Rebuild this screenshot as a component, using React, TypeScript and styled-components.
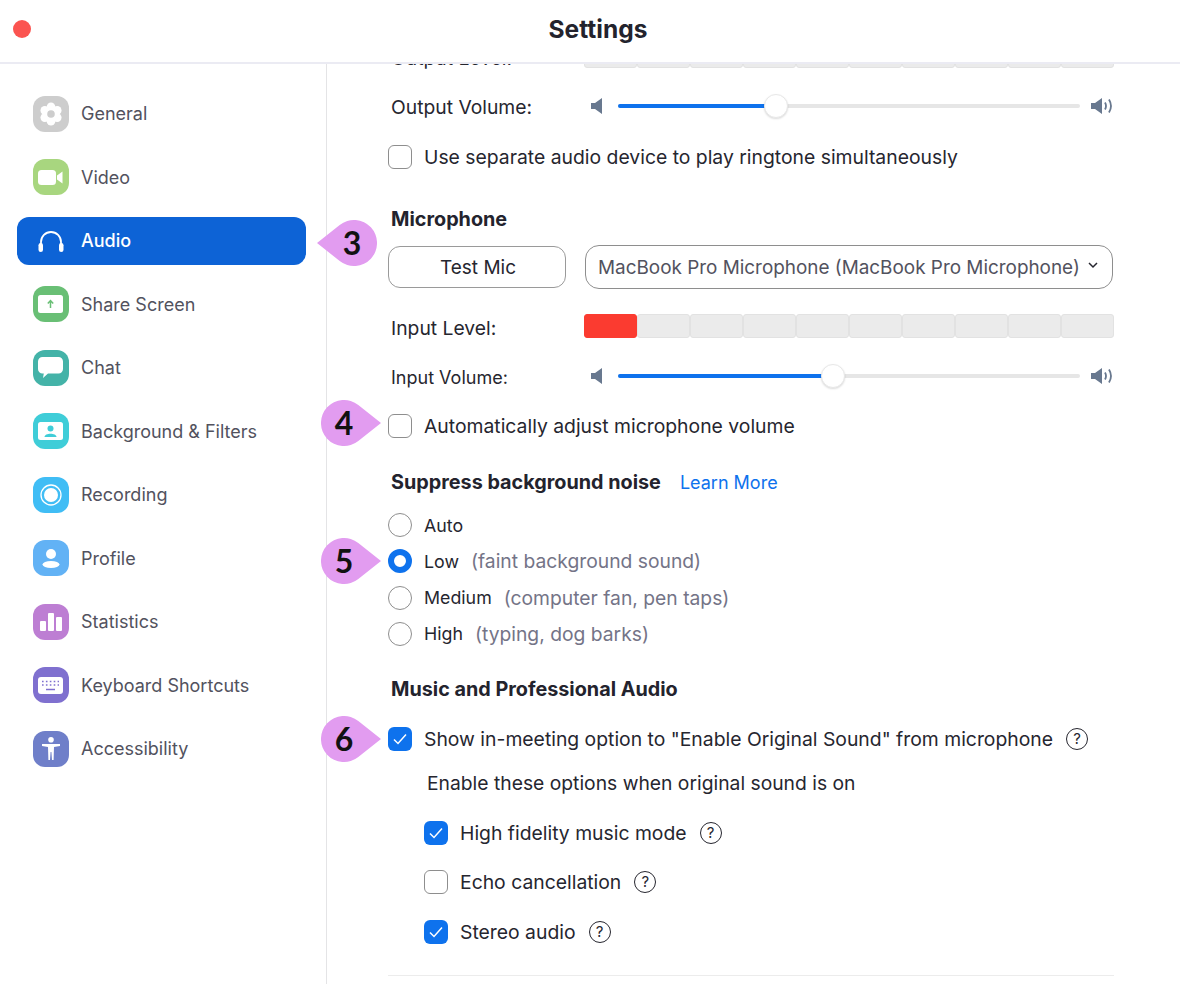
import styled, { createGlobalStyle } from "styled-components";
import type { ReactNode } from "react";

const GlobalStyle = createGlobalStyle`
    html, body {
        margin: 0;
        background: #fff;
        overflow: hidden;
    }
    * {
        box-sizing: border-box;
    }
`

const Page = styled.div`
    position: relative;
    width: 1180px;
    height: 984px;
    display: flex;
    flex-direction: column;
    overflow: hidden;
    font-family: Inter, "Liberation Sans", sans-serif;
    color: #26262f;
`

const Header = styled.header`
    position: relative;
    z-index: 1;
    height: 64px;
    flex: none;
    display: flex;
    align-items: center;
    justify-content: center;
    padding: 0 0 4px 16px;
    border-bottom: 2px solid #ebebf3;
    background: #fff;
`

const CloseDot = styled.span`
    position: absolute;
    left: 13px;
    top: 20px;
    width: 18px;
    height: 18px;
    border-radius: 50%;
    background: #fb5450;
`

const Title = styled.h1`
    margin: 0;
    font-size: 24.5px;
    font-weight: 700;
    color: #23232d;
`

const Body = styled.div`
    flex: 1;
    display: flex;
    min-height: 0;
`

const Sidebar = styled.nav`
    width: 327px;
    flex: none;
    display: flex;
    flex-direction: column;
    gap: 15.5px;
    padding: 25.5px 20px 0 17px;
    border-right: 1px solid #e4e4e6;
`

const NavItem = styled.div<{ $active?: boolean }>`
    height: 48px;
    display: flex;
    align-items: center;
    gap: 12.5px;
    padding-left: 15.5px;
    border-radius: 12px;
    font-size: 18px;
    font-weight: ${(p) => (p.$active ? 500 : 400)};
    color: ${(p) => (p.$active ? "#fff" : "#52525e")};
    background: ${(p) => (p.$active ? "#0d63d6" : "transparent")};
`

const NavIcon = styled.span<{ $bg: string }>`
    width: 36px;
    height: 36px;
    flex: none;
    display: flex;
    align-items: center;
    justify-content: center;
    border-radius: 12px;
    background: ${(p) => p.$bg};
`

const Main = styled.main`
    flex: 1;
    min-width: 0;
    overflow: hidden;
    padding: 0 66px 0 61px;
`

const Content = styled.div`
    margin-top: -20px;
    display: flex;
    flex-direction: column;
`

const LabelRow = styled.div<{ $top?: number }>`
    display: grid;
    grid-template-columns: 196px 1fr;
    grid-template-rows: 24px;
    align-items: start;
    height: 24px;
    margin-top: ${(p) => p.$top ?? 0}px;
`

const RowLabel = styled.span<{ $size?: number; $drop?: number }>`
    margin-top: ${(p) => p.$drop ?? 2}px;
    padding-left: 3px;
    font-size: ${(p) => p.$size ?? 19.3}px;
    line-height: 24px;
    white-space: nowrap;
    color: #26262f;
`

const Meter = styled.div`
    display: grid;
    grid-template-columns: repeat(10, 1fr);
    height: 24px;
`

const Segment = styled.span<{ $on?: boolean }>`
    border-radius: 3px;
    background: ${(p) => (p.$on ? "#fb3b30" : "#ebebeb")};
    border: 1px solid ${(p) => (p.$on ? "#fb3b30" : "#e2e2e2")};
`

const SliderBox = styled.div`
    display: flex;
    align-items: center;
    height: 24px;
`

const Track = styled.div`
    position: relative;
    flex: 1;
    height: 4px;
    margin: 0 11px 0 15px;
    border-radius: 2px;
    background: #e6e6e6;
`

const TrackFill = styled.div`
    height: 100%;
    border-radius: 2px;
    background: #0e72ed;
`

const Thumb = styled.span`
    position: absolute;
    top: -10px;
    width: 24px;
    height: 24px;
    margin-left: -12px;
    border-radius: 50%;
    background: #fff;
    border: 1px solid #e8e8e8;
    box-shadow: 0 1px 2px rgba(0, 0, 0, 0.14);
`

const OptionRow = styled.div<{ $top?: number; $indent?: number }>`
    display: flex;
    align-items: center;
    gap: 12px;
    height: 24px;
    margin-top: ${(p) => p.$top ?? 0}px;
    margin-left: ${(p) => p.$indent ?? 0}px;
    font-size: 19.35px;
    white-space: nowrap;
    color: #26262f;
`

const Box = styled.span<{ $checked?: boolean }>`
    width: 24px;
    height: 24px;
    flex: none;
    display: flex;
    align-items: center;
    justify-content: center;
    border-radius: 6px;
    background: ${(p) => (p.$checked ? "#0e72ed" : "#fff")};
    border: ${(p) => (p.$checked ? "none" : "1.5px solid #8e8e8e")};
`

const Help = styled.span`
    width: 22px;
    height: 22px;
    flex: none;
    display: flex;
    align-items: center;
    justify-content: center;
    margin-left: 1px;
    border-radius: 50%;
    border: 1.4px solid #26262f;
    font-size: 15px;
    color: #26262f;
`

const Heading = styled.h2<{ $top: number }>`
    display: flex;
    align-items: center;
    gap: 19px;
    height: 24px;
    margin: ${(p) => p.$top}px 0 0;
    padding-left: 3px;
    font-size: 19.8px;
    font-weight: 700;
    color: #23232d;
`

const LearnMore = styled.a`
    font-size: 18px;
    font-weight: 400;
    color: #0e72ed;
`

const MicControls = styled.div`
    display: flex;
    align-items: center;
    gap: 19px;
    height: 44px;
    margin-top: 14px;
`

const TestButton = styled.button`
    width: 178px;
    height: 42px;
    flex: none;
    padding: 0 0 0 2px;
    border: 1.5px solid #9a9a9a;
    border-radius: 12px;
    background: #fff;
    font-family: inherit;
    font-size: 19px;
    color: #26262f;
`

const DeviceSelect = styled.div`
    flex: 1;
    height: 44px;
    display: flex;
    align-items: center;
    justify-content: space-between;
    margin-right: 1px;
    padding: 0 14px 0 12px;
    border: 1.5px solid #8e8e8e;
    border-radius: 14px;
    font-size: 18.9px;
    white-space: nowrap;
    color: #52525e;
`

const Chevron = styled.svg`
    flex: none;
    margin-bottom: 4px;
`

const RadioGroup = styled.div`
    display: flex;
    flex-direction: column;
    gap: 12.33px;
    margin-top: 19px;
`

const Radio = styled.span<{ $checked?: boolean }>`
    width: 24px;
    height: 24px;
    flex: none;
    border-radius: 50%;
    background: #fff;
    border: ${(p) => (p.$checked ? "6.5px solid #0e72ed" : "1.5px solid #8e8e8e")};
`

const RadioLabel = styled.span`
    font-size: 17.8px;
`

const Hint = styled.span`
    font-size: 19.3px;
    color: #747487;
`

const SubNote = styled.div`
    height: 24px;
    display: flex;
    align-items: center;
    margin-top: 20px;
    padding-left: 39px;
    font-size: 19.3px;
    white-space: nowrap;
    color: #26262f;
`

const Divider = styled.hr`
    width: 100%;
    margin: 31px 0 0;
    border: none;
    border-top: 1px solid #ececec;
`

const CalloutWrap = styled.div<{ $x: number; $y: number; $flip?: boolean }>`
    position: absolute;
    left: ${(p) => p.$x}px;
    top: ${(p) => p.$y}px;
    width: 60px;
    height: 46px;
    display: flex;
    align-items: center;
    justify-content: ${(p) => (p.$flip ? "flex-end" : "flex-start")};
    padding-right: ${(p) => (p.$flip ? 2 : 0)}px;
`

const CalloutShape = styled.svg`
    position: absolute;
    inset: 0;
`

const CalloutNumber = styled.span`
    position: relative;
    width: 46px;
    padding-bottom: 2px;
    text-align: center;
    font-family: Lato, Inter, sans-serif;
    font-size: 32px;
    font-weight: 700;
    color: #111;
`

const Speaker = styled.svg`
    flex: none;
`

const SpeakerLowMark = styled(Speaker)`
    margin-left: 7px;
`

const Callout = ({ n, x, y, left }: { n: number; x: number; y: number; left?: boolean }) => (
    <CalloutWrap $x={x} $y={y} $flip={left}>
        <CalloutShape width="60" height="46" viewBox="0 0 60 46">
            <path
                d={left
                    ? "M0 23 L22.700 5 A23 23 0 1 1 22.700 41 Z"
                    : "M60 23 L37.300 5 A23 23 0 1 0 37.300 41 Z"}
                fill="#e29cf0"
            />
        </CalloutShape>
        <CalloutNumber>{n}</CalloutNumber>
    </CalloutWrap>
)

const SpeakerLow = () => (
    <SpeakerLowMark width="12" height="16" viewBox="0 0 12 16">
        <path d="M0 5 H4 L11 0 V16 L4 11 H0 Z" fill="#68788f" />
    </SpeakerLowMark>
)

const SpeakerHigh = () => (
    <Speaker width="23" height="16" viewBox="0 0 23 16">
        <path d="M0 5 H4 L11 0 V16 L4 11 H0 Z" fill="#68788f" />
        <path d="M14 4.500 Q16 8 14 11.500M18 1.500 Q22 8 18 14.500" stroke="#68788f" strokeWidth="1.800" fill="none" />
    </Speaker>
)

const Check = () => (
    <svg width="16" height="14" viewBox="0 0 16 14">
        <path d="M2 7.500 L6 11.500 L14 2.500" stroke="#fff" strokeWidth="1.500" fill="none" />
    </svg>
)

const VolumeSlider = ({ label, percent, top, size, drop }: { label: string; percent: number; top: number; size?: number; drop: number }) => (
    <LabelRow $top={top}>
        <RowLabel $size={size} $drop={drop}>{label}</RowLabel>
        <SliderBox>
            <SpeakerLow />
            <Track>
                <TrackFill style={{ width: `${percent}%` }} />
                <Thumb style={{ left: `${percent}%` }} />
            </Track>
            <SpeakerHigh />
        </SliderBox>
    </LabelRow>
)

const LevelMeter = ({ active }: { active: number }) => (
    <Meter>
        {Array.from({ length: 10 }, (_, i) => <Segment key={i} $on={i < active} />)}
    </Meter>
)

const lobes = [0, 60, 120, 180, 240, 300].map((deg) => ({
    x: 12 + 7.2 * Math.cos((deg * Math.PI) / 180),
    y: 12 + 7.2 * Math.sin((deg * Math.PI) / 180),
}))

const icons: { name: string; bg: string; glyph: ReactNode }[] = [
    {
        name: "General", bg: "#cdcdcd", glyph: (
            <svg width="24" height="24" viewBox="0 0 24 24">
                {lobes.map((l, i) => <circle key={i} cx={l.y} cy={l.x} r="4.300" fill="#fff" />)}
                <circle cx="12" cy="12" r="7.500" fill="#fff" />
                <circle cx="12" cy="12" r="3.800" fill="#cdcdcd" />
            </svg>
        ),
    },
    {
        name: "Video", bg: "#a8d67f", glyph: (
            <svg width="25" height="15" viewBox="0 0 25 15">
                <rect x="0" y="0" width="18" height="15" rx="3.500" fill="#fff" />
                <path d="M19 5.500 L24.500 1.500 V13.500 L19 9.500 Z" fill="#fff" />
            </svg>
        ),
    },
    {
        name: "Audio", bg: "transparent", glyph: (
            <svg width="26" height="24" viewBox="0 0 26 24">
                <path d="M3 17 V13 A10 10 0 0 1 23 13 V17" stroke="#fff" strokeWidth="1.800" fill="none" />
                <rect x="0.500" y="14" width="4.500" height="9" rx="2.250" fill="#fff" />
                <rect x="21" y="14" width="4.500" height="9" rx="2.250" fill="#fff" />
            </svg>
        ),
    },
    {
        name: "Share Screen", bg: "#69bf75", glyph: (
            <svg width="25" height="18" viewBox="0 0 25 18">
                <rect width="25" height="18" rx="2.500" fill="#fff" />
                <path d="M12.500 13 V6 M9.800 8.500 L12.500 5.500 L15.200 8.500" stroke="#69bf75" strokeWidth="1.500" fill="none" />
            </svg>
        ),
    },
    {
        name: "Chat", bg: "#44b3a8", glyph: (
            <svg width="25" height="21" viewBox="0 0 25 21">
                <path d="M4.500 0 H20.500 A4.500 4.500 0 0 1 25 4.500 V12 A4.500 4.500 0 0 1 20.500 16.500 H10 L5 21 L5.800 16.500 H4.500 A4.500 4.500 0 0 1 0 12 V4.500 A4.500 4.500 0 0 1 4.500 0 Z" fill="#fff" />
            </svg>
        ),
    },
    {
        name: "Background & Filters", bg: "#3fcdd8", glyph: (
            <svg width="25" height="18" viewBox="0 0 25 18">
                <rect width="25" height="18" rx="2.500" fill="#fff" />
                <circle cx="12.500" cy="6.500" r="3" fill="#3fcdd8" />
                <path d="M6.500 15 C6.500 10.500 18.500 10.500 18.500 15 Z" fill="#3fcdd8" />
            </svg>
        ),
    },
    {
        name: "Recording", bg: "#40bdf5", glyph: (
            <svg width="24" height="24" viewBox="0 0 24 24">
                <circle cx="12" cy="12" r="10" stroke="#fff" strokeWidth="1.300" fill="none" />
                <circle cx="12" cy="12" r="7" fill="#fff" />
            </svg>
        ),
    },
    {
        name: "Profile", bg: "#62b2f5", glyph: (
            <svg width="18" height="19" viewBox="0 0 18 19">
                <circle cx="9" cy="5" r="5" fill="#fff" />
                <ellipse cx="9" cy="15.500" rx="8.500" ry="3.500" fill="#fff" />
            </svg>
        ),
    },
    {
        name: "Statistics", bg: "#bd7ed3", glyph: (
            <svg width="22" height="18" viewBox="0 0 22 18">
                <rect x="0" y="8" width="6" height="10" rx="1" fill="#fff" />
                <rect x="8" y="0" width="6" height="18" rx="1" fill="#fff" />
                <rect x="16" y="4" width="6" height="14" rx="1" fill="#fff" />
            </svg>
        ),
    },
    {
        name: "Keyboard Shortcuts", bg: "#7f70cf", glyph: (
            <svg width="25" height="17" viewBox="0 0 25 17">
                <rect width="25" height="17" rx="3" fill="#fff" />
                <path d="M4 4.500 H21 M4 8 H21" stroke="#7f70cf" strokeWidth="1.600" strokeDasharray="1.600 2.300" />
                <path d="M8 12.500 H17" stroke="#7f70cf" strokeWidth="1.500" />
            </svg>
        ),
    },
    {
        name: "Accessibility", bg: "#6f7fc9", glyph: (
            <svg width="18" height="23" viewBox="0 0 18 23">
                <circle cx="9" cy="2.800" r="2.800" fill="#fff" />
                <path d="M0 7 H18 V9 L12 10 L11.600 23 H10 L9.400 15 H8.600 L8 23 H6.400 L6 10 L0 9 Z" fill="#fff" />
            </svg>
        ),
    },
]

export default function App() {
    return (
        <>
            <GlobalStyle />
            <Page>
                <Header>
                    <CloseDot />
                    <Title>Settings</Title>
                </Header>
                <Body>
                    <Sidebar>
                        {icons.map((item) => (
                            <NavItem key={item.name} $active={item.name === "Audio"}>
                                <NavIcon $bg={item.bg}>{item.glyph}</NavIcon>
                                {item.name}
                            </NavItem>
                        ))}
                    </Sidebar>
                    <Main>
                        <Content>
                            <LabelRow>
                                <RowLabel>Output Level:</RowLabel>
                                <LevelMeter active={0} />
                            </LabelRow>
                            <VolumeSlider label="Output Volume:" percent={34.3} top={26} drop={1} />
                            <OptionRow $top={27}>
                                <Box />
                                Use separate audio device to play ringtone simultaneously
                            </OptionRow>

                            <Heading $top={38}>Microphone</Heading>
                            <MicControls>
                                <TestButton>Test Mic</TestButton>
                                <DeviceSelect>
                                    MacBook Pro Microphone (MacBook Pro Microphone)
                                    <Chevron width="10" height="7" viewBox="0 0 10 7">
                                        <path d="M1 1 L5 5 L9 1" stroke="#26262f" strokeWidth="1.500" fill="none" />
                                    </Chevron>
                                </DeviceSelect>
                            </MicControls>
                            <LabelRow $top={25}>
                                <RowLabel>Input Level:</RowLabel>
                                <LevelMeter active={1} />
                            </LabelRow>
                            <VolumeSlider label="Input Volume:" percent={46.6} top={26} size={18} drop={2} />
                            <OptionRow $top={26}>
                                <Box />
                                Automatically adjust microphone volume
                            </OptionRow>

                            <Heading $top={32}>
                                Suppress background noise
                                <LearnMore>Learn More</LearnMore>
                            </Heading>
                            <RadioGroup>
                                <OptionRow>
                                    <Radio />
                                    <RadioLabel>Auto</RadioLabel>
                                </OptionRow>
                                <OptionRow>
                                    <Radio $checked />
                                    <RadioLabel>Low</RadioLabel>
                                    <Hint>(faint background sound)</Hint>
                                </OptionRow>
                                <OptionRow>
                                    <Radio />
                                    <RadioLabel>Medium</RadioLabel>
                                    <Hint>(computer fan, pen taps)</Hint>
                                </OptionRow>
                                <OptionRow>
                                    <Radio />
                                    <RadioLabel>High</RadioLabel>
                                    <Hint>(typing, dog barks)</Hint>
                                </OptionRow>
                            </RadioGroup>

                            <Heading $top={31}>Music and Professional Audio</Heading>
                            <OptionRow $top={26}>
                                <Box $checked><Check /></Box>
                                Show in-meeting option to "Enable Original Sound" from microphone
                                <Help>?</Help>
                            </OptionRow>
                            <SubNote>Enable these options when original sound is on</SubNote>
                            <OptionRow $top={26} $indent={36}>
                                <Box $checked><Check /></Box>
                                High fidelity music mode
                                <Help>?</Help>
                            </OptionRow>
                            <OptionRow $top={25} $indent={36}>
                                <Box />
                                Echo cancellation
                                <Help>?</Help>
                            </OptionRow>
                            <OptionRow $top={26} $indent={36}>
                                <Box $checked><Check /></Box>
                                Stereo audio
                                <Help>?</Help>
                            </OptionRow>
                            <Divider />
                        </Content>
                    </Main>
                </Body>
                <Callout n={3} x={317} y={220} left />
                <Callout n={4} x={321} y={400} />
                <Callout n={5} x={321} y={538} />
                <Callout n={6} x={321} y={716} />
            </Page>
        </>
    )
}
